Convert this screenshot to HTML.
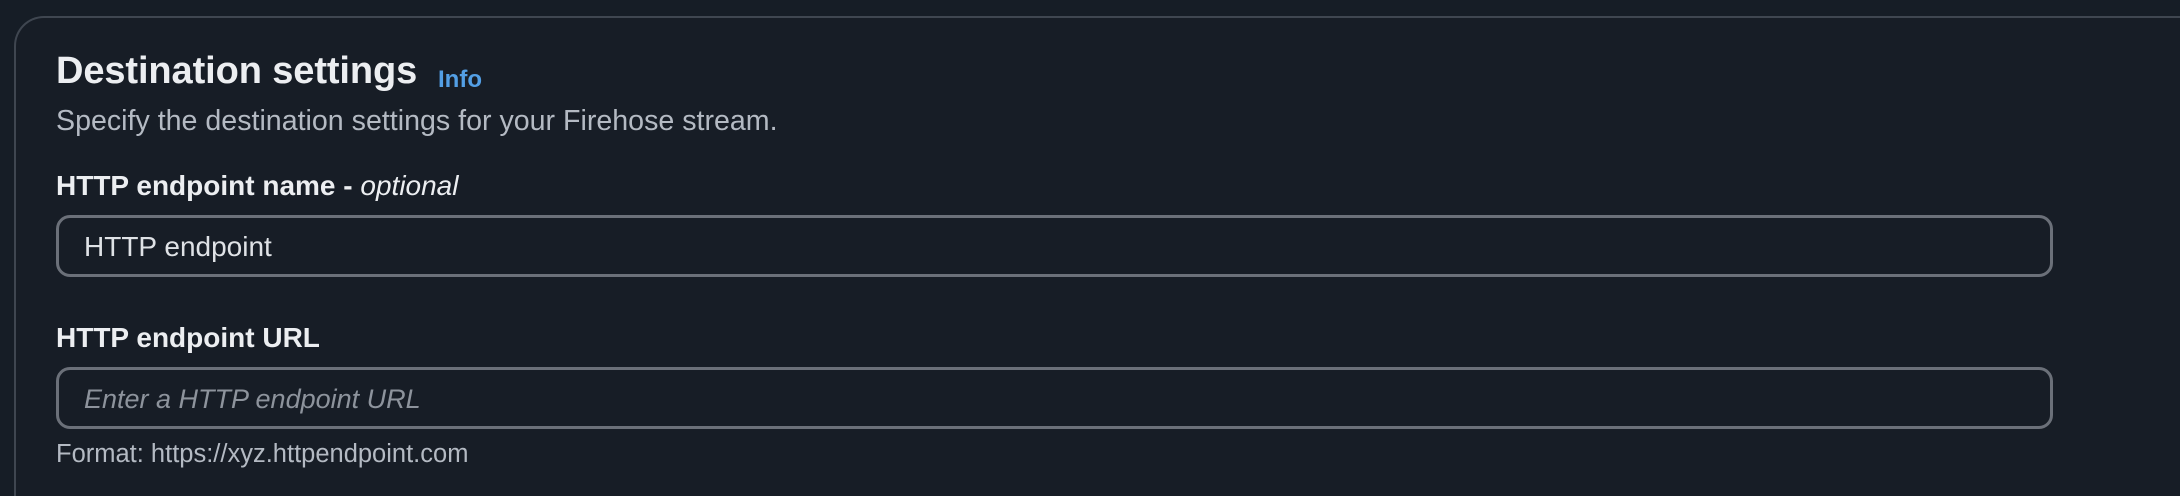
<!DOCTYPE html>
<html><head><meta charset="utf-8"><style>
html,body{margin:0;padding:0;width:2180px;height:496px;overflow:hidden;background:#161d26;font-family:"Liberation Sans",sans-serif}
.wrap{position:relative;width:2180px;height:496px;overflow:hidden;background:#161d26}
.panel{position:absolute;left:14px;top:16px;width:2300px;height:470px;border:2px solid #3f4650;border-bottom:none;border-radius:30px 0 0 0;background:#171d26}
.panel2{position:absolute;left:14px;top:470px;width:2300px;height:26px;border-left:2px solid #3f4650;background:#171d26}
.t{position:absolute;white-space:nowrap}
.title{left:56px;top:50px;font-size:38px;font-weight:bold;color:#eceef1;letter-spacing:-0.1px}
.info{left:438px;top:66px;font-size:24px;font-weight:bold;color:#539fe5}
.sub{left:56px;top:105px;font-size:28.6px;color:#b4bac3}
.lbl{left:56px;font-size:28px;font-weight:bold;color:#eceef1}
.inp{position:absolute;left:56px;width:1997px;height:62px;border:3px solid #6b7079;border-radius:14px;box-sizing:border-box}
.val{left:84px;font-size:28px;color:#dfe2e6}
.ph{left:84px;font-size:27px;font-style:italic;color:#8d939c}
.fmt{left:56px;top:440px;font-size:25.5px;color:#b4bac3}
</style></head><body><div class="wrap">
<div class="panel"></div><div class="panel2"></div>
<div class="t title">Destination settings</div>
<div class="t info">Info</div>
<div class="t sub">Specify the destination settings for your Firehose stream.</div>
<div class="t lbl" style="top:170px">HTTP endpoint name - <i style="font-weight:normal">optional</i></div>
<div class="inp" style="top:215px"></div>
<div class="t val" style="top:231px">HTTP endpoint</div>
<div class="t lbl" style="top:322px">HTTP endpoint URL</div>
<div class="inp" style="top:367px"></div>
<div class="t ph" style="top:384px">Enter a HTTP endpoint URL</div>
<div class="t fmt">Format: https://xyz.httpendpoint.com</div>
</div></body></html>
